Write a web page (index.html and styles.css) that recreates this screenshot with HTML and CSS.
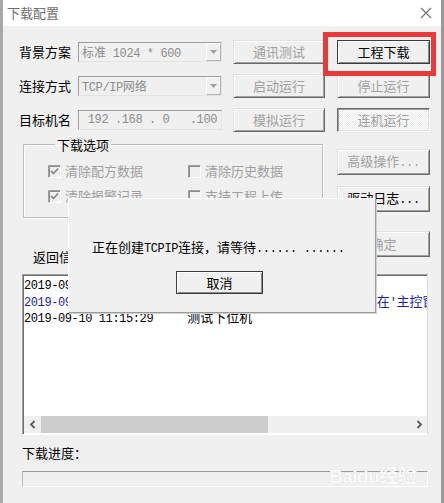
FILE: index.html
```html
<!DOCTYPE html>
<html lang="zh-CN">
  <head>
    <meta charset="UTF-8" />
    <meta name="viewport" content="width=device-width, initial-scale=1.0" />
    <title>下载配置</title>
    <link rel="stylesheet" href="styles.css">
  </head>
  <body>
    <div class="window">
      <div class="titlebar">
        <span class="title">下载配置</span>
        <svg class="close" width="12" height="12" viewBox="0 0 12 12">
          <path d="M1 1 L11 11 M11 1 L1 11" stroke="#707070" stroke-width="1.1" fill="none" />
        </svg>
      </div>

      <div class="client">
        <!-- connection settings + action buttons -->
        <div class="top-grid">
          <span class="field-label">背景方案</span>
          <div class="combo">
            <span class="combo-text">标准<span class="en"> 1024 * 600</span></span>
            <span class="drop"><svg width="7" height="4" viewBox="0 0 7 4"><path d="M0 0 H7 L3.5 4 Z" fill="#a0a0a0" /></svg></span>
          </div>
          <button class="btn" disabled>通讯测试</button>
          <button class="btn default">工程下载</button>

          <span class="field-label">连接方式</span>
          <div class="combo">
            <span class="combo-text"><span class="en">TCP/IP</span>网络</span>
            <span class="drop"><svg width="7" height="4" viewBox="0 0 7 4"><path d="M0 0 H7 L3.5 4 Z" fill="#a0a0a0" /></svg></span>
          </div>
          <button class="btn" disabled>启动运行</button>
          <button class="btn" disabled>停止运行</button>

          <span class="field-label">目标机名</span>
          <div class="combo ip">
            <span class="combo-text en"> 192 .168 . 0   .100</span>
          </div>
          <button class="btn" disabled>模拟运行</button>
          <button class="btn pressed" disabled>连机运行</button>
        </div>

        <div class="middle">
          <div class="middle-left">
            <fieldset class="group">
              <legend>下载选项</legend>
              <div class="check-grid">
                <label class="check">
                  <span class="box"><svg width="11" height="11" viewBox="0 0 11 11"><path d="M2 5 L4.5 7.5 L9 2.5" stroke="#8c8c8c" stroke-width="1.8" fill="none" /></svg></span>
                  清除配方数据
                </label>
                <label class="check"><span class="box"></span>清除历史数据</label>
                <label class="check">
                  <span class="box"><svg width="11" height="11" viewBox="0 0 11 11"><path d="M2 5 L4.5 7.5 L9 2.5" stroke="#8c8c8c" stroke-width="1.8" fill="none" /></svg></span>
                  清除报警记录
                </label>
                <label class="check"><span class="box"></span>支持工程上传</label>
              </div>
            </fieldset>
            <div class="return-label">返回信息：</div>
          </div>

          <div class="side-buttons">
            <button class="btn" disabled>高级操作<span class="en">...</span></button>
            <button class="btn">驱动日志<span class="en">...</span></button>
            <button class="btn" disabled>确定</button>
          </div>
        </div>

        <div class="log">
          <div class="log-lines">
            <div class="log-line"><span class="en">2019-09-10 11:15:28      </span>开始连接下位机</div>
            <div class="log-line blue"><span class="en">2019-09-10 11:15:29        </span>下位机连接失败，请检查是否在<span class="en">'</span>主控窗口<span class="en">'</span>中设置</div>
            <div class="log-line"><span class="en">2019-09-10 11:15:29     </span>测试下位机</div>
          </div>
          <div class="hscroll">
            <span class="arrow"><svg width="8" height="9" viewBox="0 0 8 9"><path d="M5.5 1 L2 4.5 L5.5 8" stroke="#5a5a5a" stroke-width="1.8" fill="none" /></svg></span>
            <span class="thumb"></span>
            <span class="track"></span>
            <span class="arrow"><svg width="8" height="9" viewBox="0 0 8 9"><path d="M2.5 1 L6 4.5 L2.5 8" stroke="#5a5a5a" stroke-width="1.8" fill="none" /></svg></span>
          </div>
        </div>

        <div class="progress-label">下载进度：</div>
        <div class="progress"></div>
      </div>

      <!-- connecting dialog on top of the form -->
      <div class="modal">
        <p class="modal-text">正在创建<span class="en">TCPIP</span>连接，请等待<span class="en">...... ......</span></p>
        <button class="btn default modal-btn">取消</button>
      </div>

      <div class="highlight"></div>
      <div class="watermark">Bai<span class="paw">du</span>经验</div>
    </div>
  </body>
</html>
```

FILE: styles.css
```css
/* General styling */
html,
body {
  margin: 0;
  padding: 0;
  background: #f0f0f0;
}

body {
  font-family: "Noto Sans CJK SC", "Liberation Sans", sans-serif;
  font-size: 13px;
  color: #000;
}

.en {
  font-family: "Liberation Mono", "Noto Sans CJK SC", monospace;
  font-size: 12px;
  letter-spacing: -0.4px;
  white-space: pre;
}

.window {
  position: relative;
  width: 444px;
  height: 503px;
  box-sizing: border-box;
  border-left: 3px solid #a8a8a8;
  border-right: 3px solid #9a9a9a;
  background: #f0f0f0;
  overflow: hidden;
}

/* Title bar */
.titlebar {
  height: 26px;
  background: #fff;
  display: flex;
  align-items: center;
  justify-content: space-between;
  padding: 0 9px 0 4px;
}

.title {
  color: #6f6f6f;
  line-height: 16px;
}

.client {
  padding: 14px 11px 0 19px;
}

/* Buttons */
.btn {
  box-sizing: border-box;
  height: 24px;
  margin: 0;
  padding: 0;
  font-family: "Noto Sans CJK SC", sans-serif;
  font-size: 13px;
  color: #000;
  background: #f0f0f0;
  border: 1px solid;
  border-color: #e3e3e3 #696969 #696969 #e3e3e3;
  box-shadow: inset 1px 1px 0 #fff, inset -1px -1px 0 #a0a0a0;
  line-height: 20px;
}

.btn:disabled {
  color: #a0a0a0;
}

.btn.default {
  border-color: #3c3c3c;
  box-shadow: inset 1px 1px 0 #fff, inset -1px -1px 0 #8a8a8a;
}

.btn.pressed {
  border-color: #696969 #fff #fff #696969;
  box-shadow: inset 1px 1px 0 #a0a0a0, inset -1px -1px 0 #e3e3e3;
  background: repeating-conic-gradient(#fff 0 25%, #ebebeb 0 50%) 0 0 / 2px 2px;
}

/* Top grid */
.top-grid {
  display: grid;
  grid-template-columns: 59px 155px 104px 93px;
  grid-auto-rows: 24px;
  row-gap: 10px;
  align-items: center;
  margin-left: -3px;
}

.top-grid .btn:nth-child(4n + 3) {
  width: 92px;
}

.top-grid .btn:nth-child(4n) {
  width: 93px;
}

.field-label {
  line-height: 16px;
}

.combo {
  box-sizing: border-box;
  width: 144px;
  height: 20px;
  display: flex;
  align-items: stretch;
  justify-content: space-between;
  border: 1px solid;
  border-color: #9d9d9d #e3e3e3 #e3e3e3 #9d9d9d;
  background: #f0f0f0;
}

.combo-text {
  padding-left: 3px;
  color: #8c8c8c;
  font-size: 12px;
  line-height: 18px;
  white-space: pre;
}

.combo.ip .combo-text {
  padding-left: 2px;
}

.drop {
  box-sizing: border-box;
  width: 15px;
  display: flex;
  align-items: center;
  justify-content: center;
  border: 1px solid;
  border-color: #fff #b4b4b4 #b4b4b4 #fff;
}

/* Middle area */
.middle {
  display: grid;
  grid-template-columns: 315px 93px;
  margin-top: 5px;
}

.group {
  box-sizing: border-box;
  width: 300px;
  margin: 0 0 0 1px;
  padding: 11px 0 13px 24px;
  border: 1px solid #bcbcbc;
  box-shadow: 1px 1px 0 #fff, inset 1px 1px 0 #fff;
}

.group legend {
  margin-left: 7px;
  padding: 0 2px;
  line-height: 15px;
}

.check-grid {
  display: grid;
  grid-template-columns: 140px auto;
  grid-auto-rows: 16px;
  row-gap: 9px;
}

.check {
  display: flex;
  align-items: center;
  gap: 4px;
  color: #a0a0a0;
  line-height: 16px;
}

.box {
  box-sizing: border-box;
  width: 13px;
  height: 13px;
  display: flex;
  align-items: center;
  justify-content: center;
  border: 1px solid;
  border-color: #a0a0a0 #fff #fff #a0a0a0;
  box-shadow: inset 1px 1px 0 #8a8a8a;
  background: #f0f0f0;
}

.return-label {
  margin: 31px 0 0 11px;
  line-height: 16px;
}

.side-buttons {
  display: flex;
  flex-direction: column;
}

.side-buttons .btn {
  width: 93px;
  height: 26px;
}

.side-buttons .btn:nth-child(1) {
  margin-top: 12px;
}

.side-buttons .btn:nth-child(2) {
  margin-top: 11px;
}

.side-buttons .btn:nth-child(3) {
  margin-top: 19px;
}

/* Log box */
.log {
  box-sizing: border-box;
  width: 406px;
  height: 161px;
  margin-top: 9px;
  display: flex;
  flex-direction: column;
  background: #fff;
  border-top: 1px solid #a0a0a0;
  border-left: 1px solid #a0a0a0;
  border-right: 1px solid #dcdcdc;
  border-bottom: 1px solid #fff;
  padding: 1px 0 1px 1px;
  box-shadow: inset 1px 1px 0 #6d6d6d;
}

.log-lines {
  flex: 1;
  overflow: hidden;
}

.log-line {
  height: 16.5px;
  white-space: pre;
  line-height: 16.5px;
}

.log-line.blue {
  color: #1c1cb0;
}

.hscroll {
  height: 17px;
  display: flex;
  background: #f0f0f0;
}

.arrow {
  width: 17px;
  display: flex;
  align-items: center;
  justify-content: center;
}

.thumb {
  width: 227px;
  background: #cdcdcd;
}

.track {
  flex: 1;
}

.progress-label {
  margin-top: 10px;
  line-height: 16px;
}

.progress {
  box-sizing: border-box;
  width: 406px;
  height: 16px;
  margin-top: 10px;
  border-top: 1px solid #9a9a9a;
  border-left: 1px solid #b8b8b8;
  border-right: 1px solid #fff;
  border-bottom: 1px solid #fff;
}

/* Connecting dialog */
.modal {
  position: absolute;
  left: 65px;
  top: 198px;
  width: 308px;
  height: 115px;
  box-sizing: border-box;
  background: #f0f0f0;
  border: 1px solid;
  border-color: #fdfdfd #9a9a9a #9a9a9a #fdfdfd;
  box-shadow: 1px 1px 0 #d0d0d0;
}

.modal-text {
  margin: 40px 0 0 23px;
  line-height: 16px;
  white-space: pre;
}

.modal-btn {
  width: 87px;
  height: 23px;
  margin: 14px 0 0 107px;
}

.highlight {
  position: absolute;
  left: 320px;
  top: 32px;
  width: 113px;
  height: 44px;
  box-sizing: border-box;
  border: 5px solid #e8393b;
}

.watermark {
  position: absolute;
  left: 326px;
  top: 461px;
  font-family: "Liberation Sans", "Noto Sans CJK SC", sans-serif;
  font-size: 19px;
  font-weight: bold;
  color: rgba(255, 255, 255, 0.9);
  text-shadow: 0 0 1px #d0d0d0;
  letter-spacing: -0.5px;
}
```
